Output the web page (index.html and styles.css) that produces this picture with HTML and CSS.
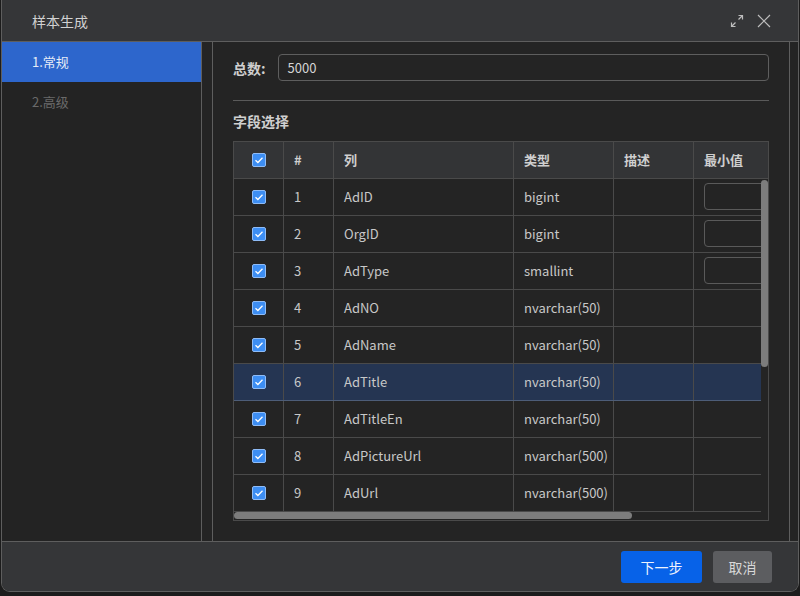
FILE: index.html
```html
<!DOCTYPE html>
<html lang="zh">
<head>
<meta charset="utf-8">
<link rel="stylesheet" href="styles.css">
</head>
<body>
<div class="dialog">
  <div class="titlebar">
    <span class="title">样本生成</span>
    <div class="tools">
      <svg class="ico" width="14" height="14" viewBox="0 0 14 14"><path d="M8.5 1.5h4V5.5M12.5 1.5L8.5 5.5M5.5 12.5H1.5V8.5M1.5 12.5L5.5 8.5" fill="none" stroke="#bdbdbd" stroke-width="1.2"/></svg>
      <svg class="ico" width="14" height="14" viewBox="0 0 14 14"><path d="M1 1L13 13M13 1L1 13" fill="none" stroke="#bdbdbd" stroke-width="1.2"/></svg>
    </div>
  </div>
  <div class="main">
    <div class="sidebar">
      <div class="step active">1.常规</div>
      <div class="step">2.高级</div>
    </div>
    <div class="gutter"></div>
    <div class="content">
      <div class="field">
        <label class="lbl">总数:</label>
        <div class="input">5000</div>
      </div>
      <div class="sep"></div>
      <div class="section">字段选择</div>
      <div class="grid">
        <div class="row head">
          <div class="c cb"><span class="check"></span></div>
          <div class="c">#</div>
          <div class="c">列</div>
          <div class="c">类型</div>
          <div class="c">描述</div>
          <div class="c">最小值</div>
        </div>
        <div class="bodywrap">
          <div class="viewport">
            <div class="row"><div class="c cb"><span class="check"></span></div><div class="c">1</div><div class="c">AdID</div><div class="c">bigint</div><div class="c"></div><div class="c"><span class="mini"></span></div></div>
            <div class="row"><div class="c cb"><span class="check"></span></div><div class="c">2</div><div class="c">OrgID</div><div class="c">bigint</div><div class="c"></div><div class="c"><span class="mini"></span></div></div>
            <div class="row"><div class="c cb"><span class="check"></span></div><div class="c">3</div><div class="c">AdType</div><div class="c">smallint</div><div class="c"></div><div class="c"><span class="mini"></span></div></div>
            <div class="row"><div class="c cb"><span class="check"></span></div><div class="c">4</div><div class="c">AdNO</div><div class="c">nvarchar(50)</div><div class="c"></div><div class="c"></div></div>
            <div class="row"><div class="c cb"><span class="check"></span></div><div class="c">5</div><div class="c">AdName</div><div class="c">nvarchar(50)</div><div class="c"></div><div class="c"></div></div>
            <div class="row sel"><div class="c cb"><span class="check"></span></div><div class="c">6</div><div class="c">AdTitle</div><div class="c">nvarchar(50)</div><div class="c"></div><div class="c"></div></div>
            <div class="row"><div class="c cb"><span class="check"></span></div><div class="c">7</div><div class="c">AdTitleEn</div><div class="c">nvarchar(50)</div><div class="c"></div><div class="c"></div></div>
            <div class="row"><div class="c cb"><span class="check"></span></div><div class="c">8</div><div class="c">AdPictureUrl</div><div class="c">nvarchar(500)</div><div class="c"></div><div class="c"></div></div>
            <div class="row"><div class="c cb"><span class="check"></span></div><div class="c">9</div><div class="c">AdUrl</div><div class="c">nvarchar(500)</div><div class="c"></div><div class="c"></div></div>
          </div>
          <div class="vlane"><div class="vthumb"></div></div>
        </div>
        <div class="hlane"><div class="hthumb"></div></div>
      </div>
    </div>
    <div class="rgutter"></div>
  </div>
  <div class="footer">
    <button class="btn primary">下一步</button>
    <button class="btn">取消</button>
  </div>
</div>
</body>
</html>
```
FILE: styles.css
```css
* { box-sizing: border-box; }
html, body { margin: 0; padding: 0; }
body {
  background: #1c1c1c;
  width: 800px;
  height: 596px;
  overflow: hidden;
  font-family: "Noto Sans CJK SC", "Noto Sans", sans-serif;
  font-size: 13px;
  color: #c8c8c8;
}
.dialog {
  margin-left: 1px;
  width: 798px;
  height: 592px;
  border: 1px solid #5e5e5e;
  border-top: none;
  border-radius: 0 0 9px 9px;
  background: #242424;
  display: flex;
  flex-direction: column;
  overflow: hidden;
}
.titlebar {
  height: 42px;
  flex: none;
  background: #353638;
  border-bottom: 1px solid #5e5e5e;
  display: flex;
  align-items: center;
  justify-content: space-between;
  padding: 0 27px 0 30px;
}
.title { font-size: 14px; color: #d2d2d2; }
.tools { display: flex; gap: 13px; align-items: center; }
.ico { display: block; }
.main { flex: 1; display: flex; min-height: 0; }
.sidebar {
  width: 200px;
  flex: none;
  border-right: 1px solid #5e5e5e;
  background: #232323;
}
.step {
  height: 40px;
  line-height: 40px;
  padding-left: 30px;
  color: #6a6a6a;
}
.step.active { background: #2d66cc; color: #e6ecf7; }
.gutter { width: 11px; flex: none; border-right: 1px solid #5e5e5e; }
.content { width: 577px; flex: none; padding: 12px 20px 0 20px; border-right: 1px solid #5e5e5e; }
.rgutter { flex: 1; }
.field { display: flex; align-items: center; gap: 12px; }
.lbl { font-weight: bold; color: #cfcfcf; font-size: 14px; }
.input {
  flex: 1;
  height: 27px;
  border: 1px solid #5e5e5e;
  border-radius: 4px;
  padding-left: 9px;
  line-height: 25px;
  color: #d4d4d4;
}
.sep { height: 1px; background: #5a5a5a; margin: 19px 0 10px; }
.section { font-weight: bold; color: #cfcfcf; font-size: 14px; height: 20px; line-height: 20px; margin-bottom: 10px; }
.grid {
  width: 536px;
  border: 1px solid #4a4a4a;
  overflow: hidden;
}
.row {
  display: grid;
  grid-template-columns: 50px 50px 180px 100px 80px 100px;
  height: 37px;
  border-bottom: 1px solid #4a4a4a;
  width: 560px;
}
.row.head { background: #333436; font-weight: bold; color: #cfcfcf; }
.row.sel { background: #253552; border-bottom-color: #4d5d78; }
.c {
  border-right: 1px solid #4a4a4a;
  padding-left: 10px;
  padding-bottom: 1px;
  display: flex;
  align-items: center;
  white-space: nowrap;
}
.c.cb { justify-content: center; padding-left: 0; padding-bottom: 0; }
.check {
  width: 14px;
  height: 14px;
  border-radius: 2px;
  background: #3d8ef3 url("data:image/svg+xml,%3Csvg xmlns='http://www.w3.org/2000/svg' width='14' height='14'%3E%3Cpath d='M3.5 7.2l2.4 2.3 4.6-4.7' fill='none' stroke='white' stroke-width='1.3'/%3E%3C/svg%3E") no-repeat center;
  border: 1px solid #8fbcf7;
}
.mini {
  width: 80px;
  height: 27px;
  border: 1px solid #5a5a5a;
  border-radius: 4px;
  flex: none;
}
.bodywrap { display: flex; height: 333px; }
.viewport { width: 527px; overflow: hidden; flex: none; }
.vlane { width: 8px; flex: none; padding-top: 1px; }
.vthumb { width: 7px; height: 187px; background: #7c7c7c; border-radius: 4px; }
.hlane { height: 8px; }
.hthumb { width: 398px; height: 7px; background: #7c7c7c; border-radius: 4px; }
.footer {
  height: 50px;
  flex: none;
  background: #353638;
  border-top: 1px solid #5e5e5e;
  display: flex;
  align-items: center;
  justify-content: flex-end;
  gap: 11px;
  padding-right: 26px;
}
.btn {
  height: 32px;
  border: none;
  border-radius: 3px;
  font-family: inherit;
  font-size: 14px;
  background: #5c5d60;
  color: #d8d8d8;
  padding: 0;
  width: 59px;
}
.btn.primary { background: #0762e8; color: #eef3fd; width: 81px; }
```
